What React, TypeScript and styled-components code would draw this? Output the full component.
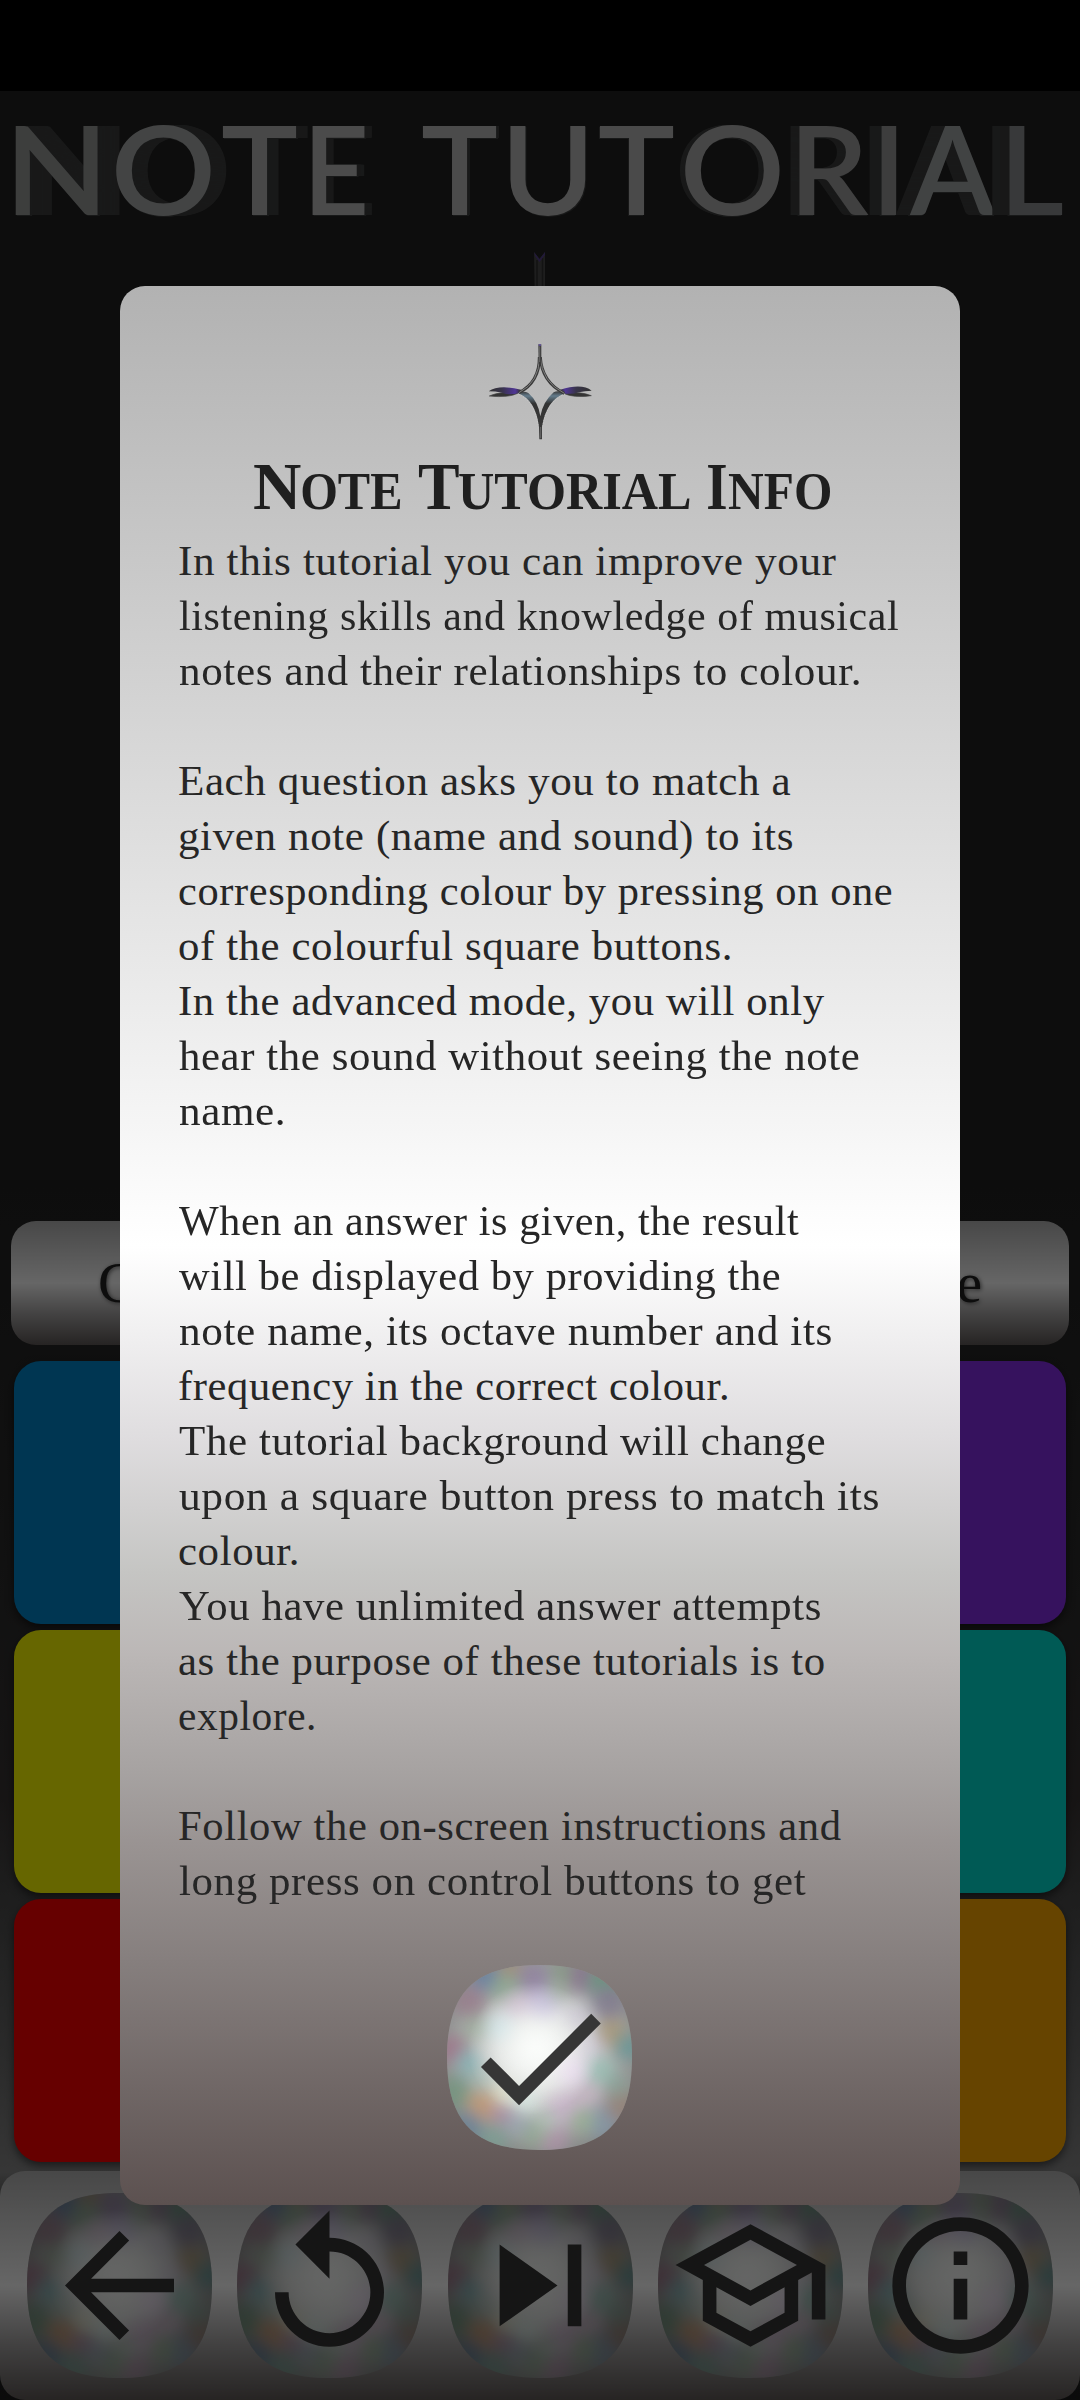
import React, { useId, useLayoutEffect, useState } from "react";
import styled, { createGlobalStyle } from "styled-components";

const serif = `"Liberation Serif", "Times New Roman", serif`;
const metal = `linear-gradient(180deg, #b3b3b3 0%, #ffffff 50%, #dfdddf 63%, #c5c5c3 71%, #bcb8b7 75%, #a6a2a1 80.5%, #9a9493 84%, #857e7d 88%, #5c5150 100%)`;
const dialogMetal = `linear-gradient(180deg, #b2b2b2 0%, #ffffff 50%, #dfdddf 60%, #c5c5c3 67%, #bcb8b7 71%, #a6a2a1 77.500%, #9a9493 81%, #857e7d 87.500%, #5c5150 100%)`;
const slab = `linear-gradient(180deg, #b3b3b3 0%, #ffffff 50%, #a8a6a6 75%, #605a58 100%)`;

const Global = createGlobalStyle`
  body { margin: 0; background: #000; }
  * { box-sizing: border-box; }
`;

const Screen = styled.div`
  position: relative;
  display: flex;
  flex-direction: column;
  width: 1080px;
  height: 2400px;
  overflow: hidden;
  background: linear-gradient(
    180deg,
    #212121 0px,
    #212121 1150px,
    #2d2d2d 1600px,
    #393434 1800px,
    #484848 1880px,
    #696969 2050px,
    #888888 2172px,
    #212121 2230px,
    #1d1d1d 2400px
  );
`;

const StatusBar = styled.div`
  height: 91px;
  flex: none;
  background: #000;
`;

const Header = styled.header`
  height: 161px;
  flex: none;
  display: flex;
  padding-left: 15px;
  font: 600 124px/1 Lato, sans-serif;
`;

const LetterSlot = styled.span<{ $before: number; $width: number }>`
  flex: none;
  width: ${(p) => p.$width}px;
  margin-left: ${(p) => p.$before}px;
  padding-top: 14px;
`;

const Letter = styled.span<{ $tone: string; $depth: number }>`
  color: ${(p) => p.$tone};
  text-shadow: ${(p) =>
    Array.from({ length: Math.max(1, Math.abs(p.$depth)) }, (_, i) => {
      const step = (i + 1) * Math.sign(p.$depth);
      return `${step}px ${i < 2 ? 1 : 0}px 0 #3e3f3f`;
    }).join(", ")};
`;

const Stage = styled.div`
  height: 969px;
  flex: none;
  display: flex;
  justify-content: center;
`;

const ModeButton = styled.div`
  height: 124px;
  flex: none;
  margin: 0 11px 16px;
  padding: 0 87px 0 87px;
  display: flex;
  align-items: center;
  justify-content: space-between;
  border-radius: 25px;
  background: ${slab};
  color: #222;
  font: 400 57px/124px ${serif};
  text-shadow: 1px 1px 4px rgba(0, 0, 0, 0.6);
`;

const Board = styled.div`
  flex: none;
  height: 810px;
  padding: 0 14px;
  display: flex;
  flex-direction: column;
  gap: 6px;
`;

const BoardRow = styled.div`
  display: flex;
  justify-content: space-between;
`;

const Tile = styled.div<{ $color: string }>`
  width: 263px;
  height: 263px;
  border-radius: 27px;
  background: ${(p) => p.$color};
  box-shadow: 0 4px 8px rgba(0, 0, 0, 0.5);
`;

const NavBar = styled.nav`
  flex: none;
  height: 229px;
  display: flex;
  align-items: center;
  justify-content: space-between;
  padding: 0 27px;
  border-radius: 25px;
  background: ${slab};
`;

const Scrim = styled.div`
  position: absolute;
  inset: 0;
  display: flex;
  justify-content: center;
  align-items: flex-start;
  padding-top: 286px;
  background: rgba(0, 0, 0, 0.6);
`;

const Dialog = styled.section`
  width: 840px;
  height: 1919px;
  padding: 58px 58px 0;
  display: flex;
  flex-direction: column;
  align-items: center;
  border-radius: 25px;
  background: ${dialogMetal};
  color: #1f1f1f;
`;

const Heading = styled.h1`
  width: 572px;
  height: 94px;
  margin: 0;
  display: flex;
  align-items: baseline;
  font: 700 67px/92px ${serif};
`;

const HeadingPart = styled.span<{ $before: number; $width: number; $size: number }>`
  flex: none;
  width: ${(p) => p.$width}px;
  margin-left: ${(p) => p.$before}px;
  font-size: ${(p) => p.$size}px;
`;

const Copy = styled.div`
  width: 100%;
  height: 1402px;
  overflow: hidden;
  color: #262626;
  font: 400 42px/55px ${serif};
`;

const Line = styled.div`
  height: 55px;
  padding-left: 1px;
  white-space: pre;
`;

const Fitted = styled.span`
  display: inline-block;
  transform-origin: 0 50%;
  white-space: pre;
`;

const Confirm = styled.div`
  margin: 29px 2px 0 0;
`;

const ButtonSvg = styled.svg`
  display: block;
  width: 185px;
  height: 185px;
  overflow: visible;
`;

const StarSvg = styled.svg`
  display: block;
  overflow: visible;
`;

/* Stretches a run of text so that its ink spans exactly `width` pixels. */
function Fit({ text, width, font, spacing = 0 }: { text: string; width: number; font: string; spacing?: number }) {
  const [box, setBox] = useState({ left: 0, scale: 1 });
  useLayoutEffect(() => {
    const ctx = document.createElement("canvas").getContext("2d");
    if (!ctx) return;
    ctx.font = font;
    const m = ctx.measureText(text);
    const ink = m.actualBoundingBoxLeft + m.actualBoundingBoxRight + spacing * (text.length - 1);
    setBox({ left: m.actualBoundingBoxLeft, scale: width / ink });
  }, [text, width, font, spacing]);
  return (
    <Fitted style={{ transform: `scaleX(${box.scale}) translateX(${box.left}px)`, letterSpacing: spacing }}>
      {text}
    </Fitted>
  );
}

const titleLetters = [
  { ch: "N", x: 15, end: 98, depth: 20, color: "#989b9a" },
  { ch: "O", x: 116, end: 211, depth: 15, color: "#a8abab" },
  { ch: "T", x: 222, end: 297, depth: 11, color: "#b5b5b5" },
  { ch: "E", x: 312, end: 365, depth: 8, color: "#bcbcbc" },
  { ch: "T", x: 422, end: 497, depth: 3, color: "#bcbcbc" },
  { ch: "U", x: 510, end: 586, depth: 1, color: "#bcbcbc" },
  { ch: "T", x: 599, end: 674, depth: -1, color: "#b8b8b8" },
  { ch: "O", x: 685, end: 780, depth: -5, color: "#b0b0b0" },
  { ch: "R", x: 799, end: 869, depth: -9, color: "#a0a0a0" },
  { ch: "I", x: 881, end: 897, depth: -12, color: "#989a9a" },
  { ch: "A", x: 909, end: 996, depth: -14, color: "#a4a8a9" },
  { ch: "L", x: 1009, end: 1063, depth: -17, color: "#8c9091" },
];

const headingParts = [
  { text: "N", x: 254, end: 301, big: true },
  { text: "OTE", x: 302, end: 401 },
  { text: "T", x: 419, end: 459, big: true },
  { text: "UTORIAL", x: 459, end: 690 },
  { text: "I", x: 708, end: 726, big: true },
  { text: "NFO", x: 728, end: 830 },
];

const copyLines: [string, number][] = [
  ["In this tutorial you can improve your", 657],
  ["listening skills and knowledge of musical", 719],
  ["notes and their relationships to colour.", 680],
  ["", 0],
  ["Each question asks you to match a", 612],
  ["given note (name and sound) to its", 613],
  ["corresponding colour by pressing on one", 713],
  ["of the colourful square buttons.", 551],
  ["In the advanced mode, you will only", 645],
  ["hear the sound without seeing the note", 680],
  ["name.", 104],
  ["", 0],
  ["When an answer is given, the result", 620],
  ["will be displayed by providing the", 601],
  ["note name, its octave number and its", 652],
  ["frequency in the correct colour.", 548],
  ["The tutorial background will change", 646],
  ["upon a square button press to match its", 699],
  ["colour.", 118],
  ["You have unlimited answer attempts", 641],
  ["as the purpose of these tutorials is to", 645],
  ["explore.", 135],
  ["", 0],
  ["Follow the on-screen instructions and", 662],
  ["long press on control buttons to get", 627],
];

const tileRows = [
  ["#0087cd", "#882deb"],
  ["#ffff00", "#00e1d5"],
  ["#ff0000", "#ffaa00"],
];

const squircle = "M50 0C85 0 100 15 100 50S85 100 50 100 0 85 0 50 15 0 50 0Z";

const opal: [number, number, number, string][] = [
  [21, 6, 7, "#5f7da4"], [34, 3, 6, "#a08a70"], [47, 8, 8, "#8a789c"], [72, 6, 8, "#86698c"],
  [85, 10, 8, "#5c9478"], [52, 21, 7, "#b2a4d4"], [32, 13, 7, "#86a68a"], [12, 20, 8, "#98788a"],
  [3, 46, 7, "#a06e88"], [12, 53, 6, "#80b4b8"], [4, 69, 8, "#70957c"], [20, 76, 8, "#c8966a"],
  [31, 80, 6, "#a984a0"], [11, 88, 8, "#68829a"], [25, 94, 7, "#7aa094"], [57, 94, 7, "#b490ac"],
  [63, 78, 9, "#cbb0cc"], [47, 91, 6, "#90ab90"], [84, 85, 8, "#8296ab"], [73, 84, 6, "#98b294"],
  [83, 57, 7, "#94c0b4"], [89, 37, 7, "#a8946e"], [98, 44, 6, "#5c9696"], [87, 20, 8, "#7d748c"],
  [29, 34, 6, "#c0dee4"], [67, 57, 7, "#e6d0ee"], [95, 76, 8, "#978074"], [32, 69, 6, "#dcdcc0"],
  [38, 22, 6, "#c4acc6"], [16, 34, 6, "#9cae9c"], [60, 14, 5, "#98a898"], [76, 70, 6, "#c8b4c4"],
  [42, 73, 6, "#d2e6e0"], [70, 28, 6, "#c6c0d0"], [20, 62, 6, "#a4b8ae"], [77, 44, 6, "#cfc8d8"],
  [62, 4, 5, "#80967e"], [38, 86, 5, "#9aa6b4"], [54, 84, 5, "#b2c4b8"], [92, 65, 5, "#86a094"],
];

const icons = {
  back: "M20 11H7.83l5.59-5.59L12 4l-8 8 8 8 1.41-1.41L7.83 13H20v-2z",
  replay: "M12 5V1L7 6l5 5V7c3.31 0 6 2.69 6 6s-2.69 6-6 6-6-2.69-6-6H4c0 4.42 3.58 8 8 8s8-3.58 8-8-3.58-8-8-8z",
  next: "M6 18l8.5-6L6 6v12zM16 6v12h2V6h-2z",
  school: "M12 3L1 9l4 2.18v6L12 21l7-3.82v-6l2-1.09V17h2V9L12 3zm6.82 6L12 12.72 5.18 9 12 5.28 18.82 9zM17 15.99l-5 2.73-5-2.73v-3.72L12 15l5-2.73v3.72z",
  info: "M11 7h2v2h-2zm0 4h2v6h-2zm1-9C6.48 2 2 6.48 2 12s4.48 10 10 10 10-4.48 10-10S17.52 2 12 2zm0 18c-4.41 0-8-3.59-8-8s3.59-8 8-8 8 3.59 8 8-3.59 8-8 8z",
  check: "M9 16.17L4.83 12l-1.42 1.41L9 19 21 7l-1.41-1.41z",
};

function OpalButton({ icon }: { icon: keyof typeof icons }) {
  const id = useId().replace(/[^a-zA-Z0-9]/g, "");
  return (
    <ButtonSvg viewBox="0 0 100 100">
      <defs>
        <clipPath id={`c${id}`}>
          <path d={squircle} />
        </clipPath>
        <filter id={`b${id}`} x="-30%" y="-30%" width="160%" height="160%">
          <feGaussianBlur stdDeviation="4" />
        </filter>
        <radialGradient id={`g${id}`} cx="50%" cy="46%" r="60%">
          <stop offset="0" stopColor="#f6f8f6" />
          <stop offset="0.35" stopColor="#d8dad8" />
          <stop offset="0.7" stopColor="#a2a4a3" />
          <stop offset="1" stopColor="#838583" />
        </radialGradient>
        <radialGradient id={`w${id}`} cx="47%" cy="45%" r="36%">
          <stop offset="0" stopColor="#fafcfa" stopOpacity="0.95" />
          <stop offset="0.45" stopColor="#fafcfa" stopOpacity="0.5" />
          <stop offset="1" stopColor="#fafcfa" stopOpacity="0" />
        </radialGradient>
      </defs>
      <g clipPath={`url(#c${id})`}>
        <rect width="100" height="100" fill={`url(#g${id})`} />
        <g filter={`url(#b${id})`} opacity="0.72">
          {opal.map(([x, y, r, c], i) => (
            <circle key={i} cx={x} cy={y} r={r + 1} fill={c} />
          ))}
        </g>
        <rect width="100" height="100" fill={`url(#w${id})`} />
      </g>
      <g transform="translate(5.8 5.8) scale(3.683)">
        <path d={icons[icon]} fill="#363636" />
      </g>
    </ButtonSvg>
  );
}

function SmallStar() {
  return (
    <StarSvg width="104" height="96" viewBox="143 311 312 288">
      <defs>
        <linearGradient id="wingL" x1="0" x2="1">
          <stop offset="0" stopColor="#303030" />
          <stop offset="0.4" stopColor="#38344a" />
          <stop offset="0.82" stopColor="#4f3596" />
          <stop offset="1" stopColor="#333" />
        </linearGradient>
        <linearGradient id="wingR" x1="1" x2="0">
          <stop offset="0" stopColor="#303030" />
          <stop offset="0.5" stopColor="#38344a" />
          <stop offset="0.85" stopColor="#4f3596" />
          <stop offset="1" stopColor="#333" />
        </linearGradient>
        <linearGradient id="blade" x1="0" y1="0" x2="0" y2="1">
          <stop offset="0" stopColor="#383838" />
          <stop offset="0.1" stopColor="#647c8c" />
          <stop offset="0.26" stopColor="#333" />
          <stop offset="1" stopColor="#3a3a3a" />
        </linearGradient>
      </defs>
      <path d="M147 467Q180 452 232 459Q205 473 147 467Z" fill="#343434" stroke="#444" strokeWidth="2" />
      <path d="M145 453Q175 432 242 448L236 458Q205 466 185 457Q165 453 145 453Z" fill="url(#wingL)" />
      <path d="M453 466Q420 452 370 459Q400 474 453 466Z" fill="#343434" stroke="#444" strokeWidth="2" />
      <path d="M454 451Q425 428 360 448L366 458Q395 464 415 456Q435 451 454 451Z" fill="url(#wingR)" />
      <path d="M232 458Q250 450 264 458Q294 484 300 528Q308 484 340 456Q352 448 376 458Q318 478 305 560L305 597H297L296 560Q286 478 232 458Z" fill="url(#blade)" />
      <path d="M234 461Q284 484 294 558M374 461Q318 484 307 558" fill="none" stroke="#d0d0d0" strokeWidth="2" strokeDasharray="4 4" />
      <path d="M297 350Q298 425 236 457M300 350Q304 425 372 459" fill="none" stroke="#3a3a3a" strokeWidth="9" />
      <path d="M297 350Q298 425 236 457M300 350Q304 425 372 459" fill="none" stroke="#a0a0a0" strokeWidth="2" />
      <path d="M294 312H303V372H295Z" fill="#3c3c3c" />
      <path d="M298 318V365M301 560V594" stroke="#808080" strokeWidth="2" />
      <path d="M295 314H302" stroke="#6a55b0" strokeWidth="4" />
    </StarSvg>
  );
}

function LargeStarTip() {
  return (
    <StarSvg width="12" height="60" viewBox="0 0 12 60">
      <path d="M0 0L5.5 7L11 0V60H1Z" fill="#4b4b4b" />
      <path d="M3 8V60M8.500 6V60" stroke="#303030" strokeWidth="1.500" />
      <path d="M0 0L5.500 7L11 0V3L5.500 10L1 4Z" fill="#54408c" />
    </StarSvg>
  );
}

export default function App() {
  return (
    <>
      <Global />
      <Screen>
        <StatusBar />
        <Header>
          {titleLetters.map((l, i) => (
            <LetterSlot key={i} $width={l.end - l.x} $before={i ? l.x - titleLetters[i - 1].end : 0}>
              <Letter $tone={l.color} $depth={l.depth}>
                <Fit text={l.ch} width={l.end - l.x} font="600 124px Lato" />
              </Letter>
            </LetterSlot>
          ))}
        </Header>
        <Stage>
          <LargeStarTip />
        </Stage>
        <ModeButton>
          <span>C</span>
          <span>e</span>
        </ModeButton>
        <Board>
          {tileRows.map((row, i) => (
            <BoardRow key={i}>
              {row.map((c) => (
                <Tile key={c} $color={c} />
              ))}
            </BoardRow>
          ))}
        </Board>
        <NavBar>
          <OpalButton icon="back" />
          <OpalButton icon="replay" />
          <OpalButton icon="next" />
          <OpalButton icon="school" />
          <OpalButton icon="info" />
        </NavBar>
        <Scrim>
          <Dialog>
            <SmallStar />
            <Heading>
              {headingParts.map((p, i) => {
                const size = p.big ? 67 : 52;
                return (
                  <HeadingPart
                    key={i}
                    $size={size}
                    $width={p.end - p.x}
                    $before={i ? p.x - headingParts[i - 1].end : 0}
                  >
                    <Fit text={p.text} width={p.end - p.x} font={`700 ${size}px "Liberation Serif"`} />
                  </HeadingPart>
                );
              })}
            </Heading>
            <Copy>
              {copyLines.map(([text, width], i) => (
                <Line key={i}>
                  {text && <Fit text={text} width={width} font={`400 42px "Liberation Serif"`} spacing={0.6} />}
                </Line>
              ))}
            </Copy>
            <Confirm>
              <OpalButton icon="check" />
            </Confirm>
          </Dialog>
        </Scrim>
      </Screen>
    </>
  );
}
